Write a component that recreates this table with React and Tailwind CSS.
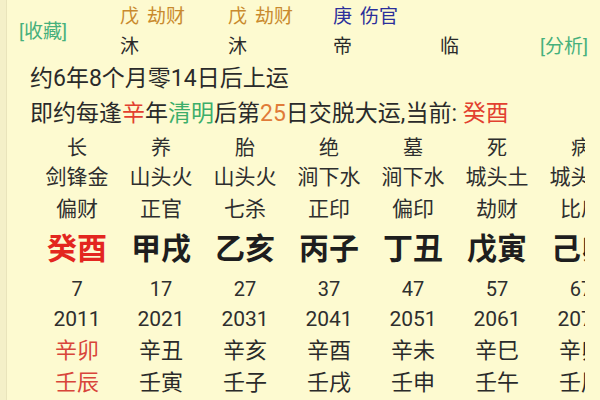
import React from 'react';

const cols = [
  { s: '长', ny: '剑锋金', sh: '偏财', gz: '癸酉', age: '7', yr: '2011', a: '辛卯', b: '壬辰', cur: true },
  { s: '养', ny: '山头火', sh: '正官', gz: '甲戌', age: '17', yr: '2021', a: '辛丑', b: '壬寅' },
  { s: '胎', ny: '山头火', sh: '七杀', gz: '乙亥', age: '27', yr: '2031', a: '辛亥', b: '壬子' },
  { s: '绝', ny: '涧下水', sh: '正印', gz: '丙子', age: '37', yr: '2041', a: '辛酉', b: '壬戌' },
  { s: '墓', ny: '涧下水', sh: '偏印', gz: '丁丑', age: '47', yr: '2051', a: '辛未', b: '壬申' },
  { s: '死', ny: '城头土', sh: '劫财', gz: '戊寅', age: '57', yr: '2061', a: '辛巳', b: '壬午' },
  { s: '病', ny: '城头土', sh: '比肩', gz: '己卯', age: '67', yr: '2071', a: '辛卯', b: '壬辰' },
];

const font = { fontFamily: '"Roboto", "Noto Sans CJK SC", sans-serif' };

function Column({ c }) {
  const red = c.cur ? 'text-[#d8453a]' : 'text-[#2a2a2a]';
  return (
    <div className="flex w-[84px] shrink-0 flex-col items-center whitespace-nowrap text-[#2e2e2e]">
      <div className="flex h-[31px] items-center text-[20px]">{c.s}</div>
      <div className="flex h-[30px] items-center text-[21px]">{c.ny}</div>
      <div className="flex h-[33px] items-center text-[21px]">{c.sh}</div>
      <div className={`flex h-[42px] items-center pt-[2px] text-[30px] font-bold ${c.cur ? 'text-[#e3261f]' : 'text-[#1e1e1e]'}`}>
        {c.gz}
      </div>
      <div className="flex h-[37px] items-center pt-[4px] text-[20px]">{c.age}</div>
      <div className="flex h-[30px] items-center text-[21px]">{c.yr}</div>
      <div className={`flex h-[31px] items-center text-[22px] ${red}`}>{c.a}</div>
      <div className={`flex h-[33px] items-center text-[22px] ${red}`}>{c.b}</div>
    </div>
  );
}

export default function App() {
  return (
    <div className="relative h-[400px] w-[600px] overflow-hidden bg-[#fdfad0]" style={font}>
      <div className="absolute inset-y-0 left-0 w-[7px] border-r border-[#e9e4bb] bg-[#f4f0c8]" />

      {/* header */}
      <div className="flex h-[62px] pt-[3px]">
        <div className="flex w-[120px] items-center pl-[19px] text-[19px] text-[#46b07c]">[收藏]</div>
        <div className="flex flex-1 flex-col">
          <div className="flex h-[29px] items-center text-[19px]">
            <div className="w-[108px] text-[#c98a2e]">戊<span className="ml-[8px]">劫财</span></div>
            <div className="w-[105px] text-[#c98a2e]">戊<span className="ml-[8px]">劫财</span></div>
            <div className="w-[107px] text-[#2b2f9b]">庚<span className="ml-[8px]">伤官</span></div>
          </div>
          <div className="flex h-[30px] items-center text-[19px] text-[#2a2a2a]">
            <div className="w-[108px]">沐</div>
            <div className="w-[105px]">沐</div>
            <div className="w-[107px]">帝</div>
            <div className="w-[100px]">临</div>
            <div className="text-[19px] text-[#46b07c]">[分析]</div>
          </div>
        </div>
      </div>

      {/* lines */}
      <div className="pl-[30px] text-[23px] text-[#2a2a2a]">
        <div className="flex h-[35px] items-center">约6年8个月零14日后上运</div>
        <div className="flex h-[35px] items-center whitespace-nowrap">
          即约每逢<span className="text-[#e2402f]">辛</span>年<span className="text-[#3cae6a]">清明</span>后第
          <span className="text-[#e07b39]">25</span>日交脱大运,当前:&nbsp;<span className="text-[#e2402f]">癸酉</span>
        </div>
      </div>

      {/* dayun grid */}
      <div className="w-[585px] overflow-hidden pl-[35px]">
        <div className="flex">
          {cols.map((c, i) => (
            <Column key={i} c={c} />
          ))}
        </div>
      </div>
    </div>
  );
}
